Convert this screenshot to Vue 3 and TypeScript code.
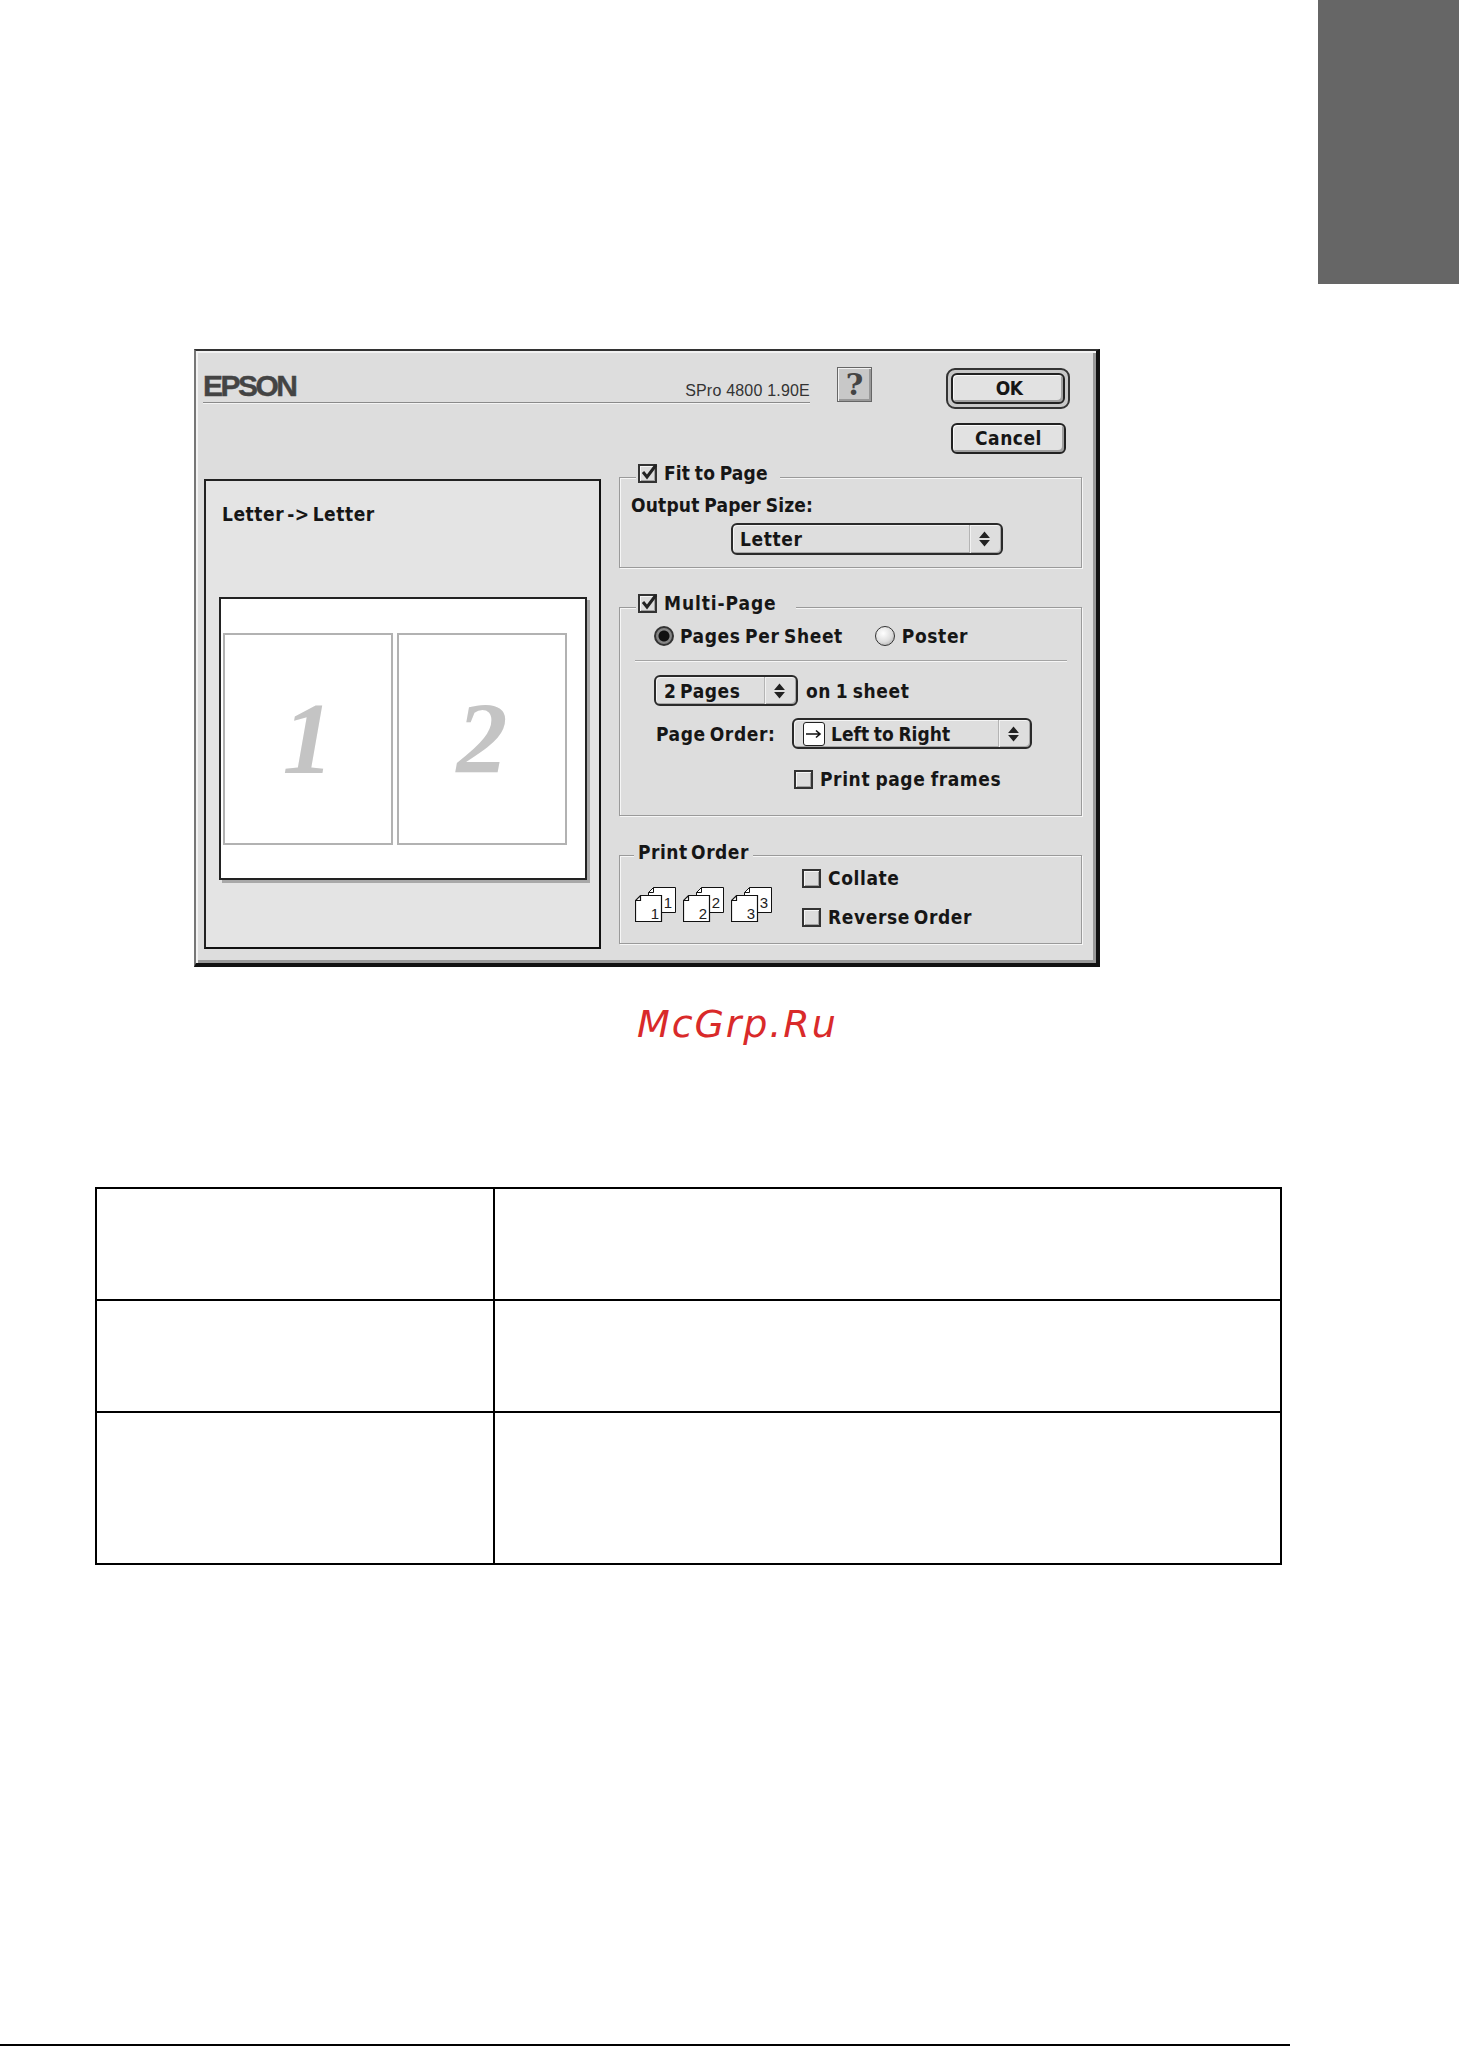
<script setup lang="ts">
const printIcons: string[] = ['1', '2', '3']
const tableRows: number[] = [1, 2, 3]
</script>

<template>
  <div class="page">
    <div class="tab"></div>

    <section class="dialog">
      <header class="head">
        <div class="brand">
          <span class="epson">EPSON</span>
          <span class="version">SPro 4800 1.90E</span>
        </div>
        <button class="help">?</button>
        <div class="actions">
          <div class="ok-ring"><button class="btn ok">OK</button></div>
          <button class="btn cancel">Cancel</button>
        </div>
      </header>

      <div class="body">
        <div class="preview">
          <div class="preview-title">Letter -&gt; Letter</div>
          <div class="paper">
            <div class="sheet"><span class="num">1</span></div>
            <div class="sheet"><span class="num">2</span></div>
          </div>
        </div>

        <div class="groups">
          <div class="group fit">
            <div class="legend legend-fit">
              <span class="check on">
                <svg viewBox="0 0 20 20" width="20" height="20"><path d="M4 9 L8 14 L17 2" fill="none" stroke="#222" stroke-width="3" /></svg>
              </span>
              <span>Fit to Page</span>
            </div>
            <div class="label output">Output Paper Size:</div>
            <div class="select letter">
              <span class="select-text">Letter</span>
              <span class="stepper">
                <svg viewBox="0 0 12 16" width="13" height="18"><path d="M6 1 L11 7 H1 Z M1 9 H11 L6 15 Z" fill="#222" /></svg>
              </span>
            </div>
          </div>

          <div class="group multi">
            <div class="legend legend-multi">
              <span class="check on">
                <svg viewBox="0 0 20 20" width="20" height="20"><path d="M4 9 L8 14 L17 2" fill="none" stroke="#222" stroke-width="3" /></svg>
              </span>
              <span>Multi-Page</span>
            </div>
            <div class="radios">
              <span class="radio on"></span>
              <span class="radio-label first">Pages Per Sheet</span>
              <span class="radio"></span>
              <span class="radio-label">Poster</span>
            </div>
            <div class="separator"></div>
            <div class="row pages-row">
              <div class="select pages">
                <span class="select-text">2 Pages</span>
                <span class="stepper">
                  <svg viewBox="0 0 12 16" width="13" height="18"><path d="M6 1 L11 7 H1 Z M1 9 H11 L6 15 Z" fill="#222" /></svg>
                </span>
              </div>
              <span class="label sheet-label">on 1 sheet</span>
            </div>
            <div class="row order-row">
              <span class="label order-label">Page Order:</span>
              <div class="select order">
                <span class="order-icon">
                  <svg viewBox="0 0 16 10" width="16" height="10"><path d="M0 5 H13 M10 1.5 L14 5 L10 8.5" fill="none" stroke="#111" stroke-width="1.6" /></svg>
                </span>
                <span class="select-text">Left to Right</span>
                <span class="stepper">
                  <svg viewBox="0 0 12 16" width="13" height="18"><path d="M6 1 L11 7 H1 Z M1 9 H11 L6 15 Z" fill="#222" /></svg>
                </span>
              </div>
            </div>
            <div class="row frames-row">
              <span class="check"></span>
              <span class="label frames-label">Print page frames</span>
            </div>
          </div>

          <div class="group print">
            <div class="legend legend-print"><span>Print Order</span></div>
            <div class="print-content">
              <div class="stacks">
                <svg v-for="n in printIcons" :key="n" class="stack" viewBox="0 0 41 35" width="41" height="35">
                  <path d="M18.5 .5 H40.5 V25.5 H13.5 V5.5 Z M18.5 .5 V5.5 H13.5" fill="#fff" stroke="#111" />
                  <path d="M5.5 8.5 H26.5 V34.5 H.5 V13.5 Z M5.5 8.5 V13.5 H.5" fill="#fff" stroke="#111" stroke-width="1.2" />
                  <text x="33" y="21" class="stack-num">{{ n }}</text>
                  <text x="20" y="32" class="stack-num">{{ n }}</text>
                </svg>
              </div>
              <div class="print-checks">
                <div class="row collate"><span class="check"></span><span class="label">Collate</span></div>
                <div class="row reverse"><span class="check"></span><span class="label reverse-label">Reverse Order</span></div>
              </div>
            </div>
          </div>
        </div>
      </div>
    </section>

    <div class="watermark">McGrp.Ru</div>

    <table class="grid">
      <tbody>
        <tr v-for="r in tableRows" :key="r" :class="'tr' + r">
          <td class="c1"></td>
          <td></td>
        </tr>
      </tbody>
    </table>

    <div class="foot"></div>
  </div>
</template>

<style>
html, body { margin: 0; background: #fff; }
</style>

<style scoped>
.page {
  position: relative;
  width: 1459px;
  height: 2046px;
  overflow: hidden;
  background: #fff;
  display: flex;
  flex-direction: column;
  font-family: "DejaVu Sans Condensed", "DejaVu Sans", sans-serif;
  font-stretch: condensed;
  font-weight: 700;
  font-size: 19px;
  color: #161616;
}
.tab {
  position: absolute;
  top: 0;
  right: 0;
  width: 141px;
  height: 284px;
  background: #666;
}
.dialog {
  box-sizing: border-box;
  width: 906px;
  height: 618px;
  margin: 349px 0 0 194px;
  background: #ddd;
  border-top: 2px solid #333;
  border-left: 2px solid #777;
  border-right: 4px solid #111;
  border-bottom: 4px solid #111;
  box-shadow: inset 2px 2px 0 #f2f2f2, inset -3px -3px 0 #999;
  flex: none;
}
.head {
  display: flex;
  height: 113px;
  padding-left: 7px;
}
.brand {
  box-sizing: border-box;
  width: 607px;
  height: 52px;
  display: flex;
  justify-content: space-between;
  align-items: flex-end;
  border-bottom: 1px solid #8a8a8a;
  box-shadow: 0 1px 0 #f4f4f4;
}
.epson {
  font-family: "Liberation Sans", sans-serif;
  font-stretch: normal;
  font-weight: 700;
  font-size: 30px;
  line-height: 30px;
  letter-spacing: -2.5px;
  color: #444;
  margin-bottom: 1px;
  -webkit-text-stroke: 0.4px #444;
}
.version {
  font-family: "Liberation Sans", sans-serif;
  font-stretch: normal;
  font-weight: 400;
  font-size: 16px;
  line-height: 18px;
  letter-spacing: 0.2px;
  color: #333;
  margin-bottom: 2px;
}
.help {
  box-sizing: border-box;
  width: 35px;
  height: 35px;
  margin: 16px 0 0 27px;
  padding: 0;
  border: 1px solid #666;
  background: #c8c8c8;
  box-shadow: inset 1px 1px 0 #f2f2f2, inset -2px -2px 0 #999;
  font-family: "DejaVu Serif", serif;
  font-weight: 700;
  font-size: 30px;
  line-height: 30px;
  color: #444;
}
.actions {
  display: flex;
  flex-direction: column;
  margin: 17px 0 0 74px;
}
.ok-ring {
  box-sizing: border-box;
  width: 124px;
  height: 41px;
  padding: 3px;
  border: 2px solid #333;
  border-radius: 9px;
  background: #c8c8c8;
}
.btn {
  box-sizing: border-box;
  display: block;
  padding: 0 0 2px;
  background: #e2e2e2;
  border: 2px solid #222;
  border-radius: 6px;
  box-shadow: inset 1px 1px 0 #fafafa, inset -2px -2px 0 #a0a0a0;
  font: inherit;
  color: #161616;
  letter-spacing: 0.5px;
}
.ok { width: 100%; height: 100%; padding-left: 2px; letter-spacing: -0.6px; }
.cancel {
  width: 115px;
  height: 31px;
  margin: 14px 0 0 5px;
}
.body {
  display: flex;
  padding-left: 8px;
}
.preview {
  box-sizing: border-box;
  width: 397px;
  height: 470px;
  margin-top: 15px;
  background: #e4e4e4;
  border: 2px solid #222;
  border-right-color: #111;
  border-bottom-color: #111;
  padding: 0 13px;
}
.preview-title {
  margin: 22px 0 0 3px;
  height: 22px;
  line-height: 22px;
  letter-spacing: 0.55px;
  word-spacing: -3.5px;
}
.paper {
  box-sizing: border-box;
  width: 368px;
  height: 283px;
  margin-top: 72px;
  background: #fff;
  border: 2px solid #222;
  box-shadow: 3px 3px 0 #a8a8a8;
  padding: 34px 2px 0;
  display: flex;
  gap: 4px;
}
.sheet {
  box-sizing: border-box;
  width: 170px;
  height: 212px;
  border: 2px solid #b2b2b2;
  display: flex;
  align-items: center;
  justify-content: center;
}
.num {
  font-family: "Liberation Serif", serif;
  font-stretch: normal;
  font-style: italic;
  font-weight: 700;
  font-size: 102px;
  line-height: 102px;
  color: #c4c4c4;
  margin-top: 0;
}
.groups {
  width: 463px;
  margin-left: 18px;
  padding-top: 13px;
  display: flex;
  flex-direction: column;
  gap: 39px;
}
.group {
  box-sizing: border-box;
  border: 1px solid #9a9a9a;
  box-shadow: inset 1px 1px 0 #f6f6f6, 1px 1px 0 #f6f6f6;
}
.fit { height: 91px; }
.multi { height: 209px; }
.print { height: 89px; }
.legend {
  display: flex;
  align-items: center;
  gap: 7px;
  width: fit-content;
  height: 20px;
  line-height: 20px;
  margin: -15px 0 0 16px;
  padding: 0 2px;
  background: #ddd;
}
.legend-fit { padding-right: 12px; letter-spacing: 0.16px; word-spacing: -1.5px; }
.legend-multi { padding-right: 19px; letter-spacing: 0.9px; }
.legend-print {
  padding-left: 4px;
  padding-right: 4px;
  margin: -14px 0 0 14px;
  letter-spacing: 0.5px;
  word-spacing: -3px;
}
.check {
  box-sizing: border-box;
  position: relative;
  flex: none;
  display: inline-block;
  width: 19px;
  height: 19px;
  border: 2px solid #333;
  background: #dcdcdc;
  box-shadow: inset 1px 1px 0 #f6f6f6, inset -1px -1px 0 #a0a0a0;
}
.check svg {
  position: absolute;
  left: -1px;
  top: -3px;
}
.label { letter-spacing: 0.6px; line-height: 22px; }
.output {
  margin: 11px 0 0 11px;
  height: 22px;
  letter-spacing: 0.19px;
  word-spacing: -1.5px;
}
.select {
  box-sizing: border-box;
  display: flex;
  align-items: center;
  background: #dedede;
  border: 2px solid #2a2a2a;
  border-radius: 6px;
  box-shadow: inset 1px 1px 0 #f4f4f4, inset -1px -1px 0 #a8a8a8;
}
.select-text { flex: 1; letter-spacing: 0.6px; line-height: 22px; white-space: nowrap; }
.stepper {
  box-sizing: border-box;
  flex: none;
  height: 100%;
  display: flex;
  align-items: center;
  justify-content: center;
  width: 32px;
  padding-right: 2px;
  border-left: 1px solid #b4b4b4;
  box-shadow: inset 1px 0 0 #f2f2f2;
}
.letter {
  width: 272px;
  height: 32px;
  margin: 7px 0 0 111px;
  padding-left: 7px;
}
.radios {
  display: flex;
  align-items: center;
  margin: 11px 0 0 34px;
  height: 24px;
}
.radio {
  box-sizing: border-box;
  flex: none;
  width: 20px;
  height: 20px;
  border: 1.5px solid #333;
  border-radius: 50%;
  background: radial-gradient(circle at 40% 35%, #fff 0, #ddd 55%, #999 100%);
}
.radio.on {
  border-width: 2px;
  background: radial-gradient(circle, #111 0 5px, #888 6px, #777 100%);
}
.radio-label {
  margin-left: 7px;
  letter-spacing: 0.6px;
  word-spacing: -2px;
  line-height: 22px;
}
.radio-label.first { margin-left: 6px; margin-right: 32px; }
.separator {
  width: 432px;
  height: 1px;
  margin: 12px 0 0 15px;
  background: #a4a4a4;
  box-shadow: 0 1px 0 #f6f6f6;
}
.row { display: flex; align-items: center; }
.pages-row { margin: 14px 0 0 34px; gap: 8px; }
.sheet-label { word-spacing: -2px; }
.pages {
  width: 144px;
  height: 31px;
  padding-left: 8px;
}
.pages .select-text { word-spacing: -3px; }
.order-row { margin: 12px 0 0 36px; }
.order-label { width: 136px; word-spacing: -2.6px; }
.order {
  width: 240px;
  height: 31px;
  padding-left: 9px;
}
.order .select-text { letter-spacing: 0.06px; word-spacing: -1.5px; }
.order-icon {
  box-sizing: border-box;
  flex: none;
  width: 22px;
  height: 24px;
  margin-right: 6px;
  background: #fff;
  border: 1px solid #222;
  border-radius: 3px;
  display: flex;
  align-items: center;
  justify-content: center;
}
.frames-row { margin: 19px 0 0 174px; gap: 7px; }
.frames-label { word-spacing: -1.3px; }
.reverse-label { word-spacing: -2.6px; }
.print-content { display: flex; }
.stacks {
  display: flex;
  gap: 7px;
  margin: 25px 0 0 15px;
}
.stack { display: block; }
.stack-num {
  font-family: "Liberation Sans", sans-serif;
  font-stretch: normal;
  font-weight: 400;
  font-size: 15px;
  fill: #222;
  text-anchor: middle;
}
.print-checks { margin-left: 30px; }
.collate { margin-top: 6px; gap: 7px; height: 20px; }
.reverse { margin-top: 19px; gap: 7px; height: 20px; }
.watermark {
  margin: 34px 0 0 637px;
  height: 46px;
  line-height: 46px;
  font-family: "DejaVu Sans", sans-serif;
  font-stretch: normal;
  font-style: oblique;
  font-weight: 400;
  font-size: 38px;
  letter-spacing: 1.9px;
  color: #d92a2a;
  flex: none;
}
.grid {
  width: 1187px;
  margin: 140px 0 0 95px;
  border-collapse: collapse;
  table-layout: fixed;
  flex: none;
}
.grid td { padding: 0; border: 2px solid #000; }
.c1 { width: 396px; }
.tr1, .tr2 { height: 112px; }
.tr3 { height: 152px; }
.foot {
  width: 1290px;
  height: 2px;
  margin-top: auto;
  background: #000;
  flex: none;
}
</style>
